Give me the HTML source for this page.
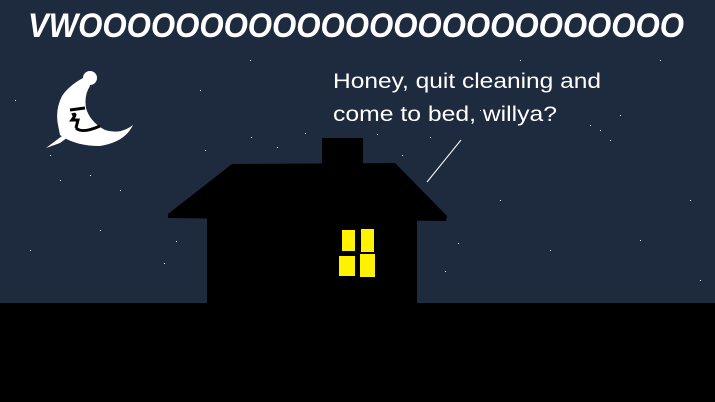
<!DOCTYPE html>
<html><head><meta charset="utf-8"><style>
html,body{margin:0;padding:0;background:#1e2a3e;overflow:hidden}
svg{display:block}
</style></head><body>
<svg width="715" height="402" viewBox="0 0 715 402" xmlns="http://www.w3.org/2000/svg">
<rect width="715" height="402" fill="#1e2a3e"/>
<g fill="#fff">
<rect x="50" y="155" width="1" height="1"/><rect x="90" y="175" width="1" height="1"/><rect x="120" y="190" width="1" height="1"/>
<rect x="205" y="150" width="1" height="1"/><rect x="251" y="137" width="1" height="1"/><rect x="277" y="147" width="1" height="1"/>
<rect x="305" y="133" width="1" height="1"/><rect x="377" y="134" width="1" height="1"/><rect x="430" y="137" width="1" height="1"/>
<rect x="402" y="155" width="1" height="1"/><rect x="176" y="241" width="1" height="1"/><rect x="164" y="263" width="1" height="1"/>
<rect x="445" y="271" width="1" height="1"/><rect x="458" y="243" width="1" height="1"/><rect x="500" y="200" width="1" height="1"/>
<rect x="550" y="250" width="1" height="1"/><rect x="600" y="130" width="1" height="1"/><rect x="620" y="115" width="1" height="1"/>
<rect x="590" y="125" width="1" height="1"/><rect x="610" y="140" width="1" height="1"/><rect x="660" y="60" width="1" height="1"/>
<rect x="690" y="200" width="1" height="1"/><rect x="30" y="250" width="1" height="1"/><rect x="100" y="230" width="1" height="1"/>
<rect x="700" y="280" width="1" height="1"/><rect x="520" y="60" width="1" height="1"/><rect x="15" y="100" width="1" height="1"/>
<rect x="250" y="60" width="1" height="1"/><rect x="200" y="90" width="1" height="1"/><rect x="300" y="180" width="1" height="1"/>
<rect x="640" y="240" width="1" height="1"/><rect x="480" y="110" width="1" height="1"/><rect x="60" y="180" width="1" height="1"/>
</g>
<text x="28" y="37" font-family="Liberation Sans, sans-serif" font-weight="bold" font-style="italic" font-size="34" fill="#fff" textLength="656" lengthAdjust="spacingAndGlyphs">VWOOOOOOOOOOOOOOOOOOOOOOOOO</text>
<text x="333" y="88" font-family="Liberation Sans, sans-serif" font-size="21" fill="#fff" textLength="268" lengthAdjust="spacingAndGlyphs">Honey, quit cleaning and</text>
<text x="333" y="121" font-family="Liberation Sans, sans-serif" font-size="21" fill="#fff" textLength="224" lengthAdjust="spacingAndGlyphs">come to bed, willya?</text>
<line x1="427" y1="182" x2="461" y2="140" stroke="#fff" stroke-width="1"/>
<!-- moon -->
<g fill="#fff">
<circle cx="90" cy="78" r="7"/>
<path d="M87 76 Q70 84 62 96 Q55 110 58 125 L60 135 Q75 146 100 146 Q125 142 133 125 Q120 135 105 130 Q90 122 86 108 Q84 95 90 86 Z"/>
<path d="M46 148 L62 136 L75 132 L60 143 Z"/>
</g>
<path d="M70 110 L85 108 M72 115 Q78 112 72 120 L78 120 L76 128 M76 128 Q82 134 100 126" stroke="#000" stroke-width="3" fill="none"/>
<!-- house -->
<g fill="#000">
<rect x="322" y="138" width="41" height="30"/>
<path d="M232 164 L395 163 L447 216 L446 221 L168 218 L168 214 Z"/>
<rect x="207" y="215" width="210" height="95"/>
<rect x="0" y="303" width="715" height="99"/>
</g>
<g fill="#fff200">
<rect x="342" y="230" width="13" height="21"/>
<rect x="361" y="229" width="13" height="23"/>
<rect x="339" y="256" width="16" height="20"/>
<rect x="360" y="254" width="15" height="23"/>
</g>
</svg>
</body></html>
